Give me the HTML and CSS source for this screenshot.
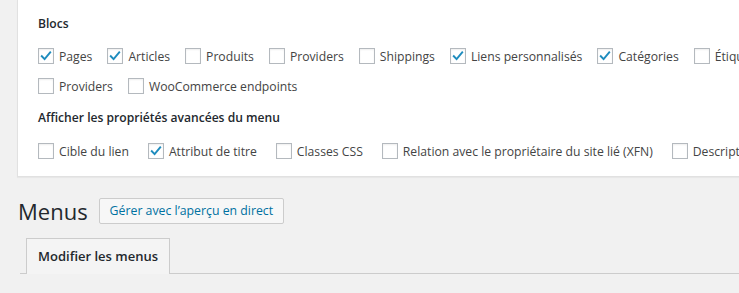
FILE: index.html
```html
<!DOCTYPE html>
<html lang="fr">
<head>
<meta charset="utf-8">
<title>Menus</title>
<link rel="stylesheet" href="styles.css">
</head>
<body>
<div class="screen-options">
  <h5 class="opt-title">Blocs</h5>
  <div class="opt-row">
    <label class="opt"><span class="cb"><svg viewBox="0 0 16 16"><path d="M3.2 8.2 L6.4 11.6 L12.8 3.8"/></svg></span>Pages</label>
    <label class="opt"><span class="cb"><svg viewBox="0 0 16 16"><path d="M3.2 8.2 L6.4 11.6 L12.8 3.8"/></svg></span>Articles</label>
    <label class="opt"><span class="cb"></span>Produits</label>
    <label class="opt"><span class="cb"></span>Providers</label>
    <label class="opt"><span class="cb"></span>Shippings</label>
    <label class="opt"><span class="cb"><svg viewBox="0 0 16 16"><path d="M3.2 8.2 L6.4 11.6 L12.8 3.8"/></svg></span>Liens personnalisés</label>
    <label class="opt"><span class="cb"><svg viewBox="0 0 16 16"><path d="M3.2 8.2 L6.4 11.6 L12.8 3.8"/></svg></span>Catégories</label>
    <label class="opt"><span class="cb"></span>Étiquettes</label>
  </div>
  <div class="opt-row">
    <label class="opt"><span class="cb"></span>Providers</label>
    <label class="opt"><span class="cb"></span>WooCommerce endpoints</label>
  </div>
  <h5 class="opt-title second">Afficher les propriétés avancées du menu</h5>
  <div class="opt-row third">
    <label class="opt"><span class="cb"></span>Cible du lien</label>
    <label class="opt"><span class="cb"><svg viewBox="0 0 16 16"><path d="M3.2 8.2 L6.4 11.6 L12.8 3.8"/></svg></span>Attribut de titre</label>
    <label class="opt"><span class="cb"></span>Classes CSS</label>
    <label class="opt"><span class="cb"></span>Relation avec le propriétaire du site lié (XFN)</label>
    <label class="opt"><span class="cb"></span>Description</label>
  </div>
</div>
<div class="wrap">
  <div class="page-head">
    <h1 class="page-title">Menus</h1>
    <a class="button" href="#">Gérer avec l’aperçu en direct</a>
  </div>
  <div class="tabs">
    <a class="tab" href="#">Modifier les menus</a>
  </div>
</div>
</body>
</html>
```
FILE: styles.css
```css
html, body {
  margin: 0;
  padding: 0;
  overflow: hidden;
}
body {
  background: #f1f1f1;
  font-family: "Open Sans", "Noto Sans", sans-serif;
  font-size: 12.2px;
  color: #444;
  width: 739px;
  height: 293px;
}
.screen-options {
  margin-left: 17px;
  width: 900px;
  background: #fff;
  border: 1px solid #e1e1e1;
  border-top: none;
  box-shadow: 0 1px 1px rgba(0,0,0,.04);
  padding: 15px 0 10px 20px;
}
.opt-title {
  margin: 0;
  font-size: 12.1px;
  line-height: 18px;
  font-weight: 600;
  color: #23282d;
}
.opt-title.second {
  margin-top: 8px;
}
.opt-row {
  display: flex;
  align-items: center;
  height: 30px;
  white-space: nowrap;
}
.opt-title + .opt-row {
  margin-top: 8px;
}
.opt-row.third {
  margin-top: 9px;
}
.opt {
  display: flex;
  align-items: center;
  margin-right: 15px;
  color: #444;
}
.opt-row.third .opt {
  margin-right: 19px;
}
.cb {
  width: 14px;
  height: 14px;
  border: 1px solid #b4b9be;
  background: #fff;
  box-shadow: inset 0 1px 2px rgba(0,0,0,.07);
  margin-right: 5px;
  flex: none;
  display: flex;
}
.cb svg {
  width: 14px;
  height: 14px;
}
.cb path {
  fill: none;
  stroke: #1e8cbe;
  stroke-width: 2.2;
  stroke-linecap: square;
}
.wrap {
  padding-left: 18px;
}
.page-head {
  margin-top: 21px;
  display: flex;
  align-items: center;
  height: 26px;
}
.page-title {
  margin: 0 11px 0 0;
  font-size: 22px;
  font-weight: 400;
  line-height: 26px;
  color: #23282d;
}
.button {
  display: inline-block;
  height: 24px;
  line-height: 24px;
  padding: 0 10px;
  border: 1px solid #ccc;
  border-radius: 2px;
  background: #f7f7f7;
  color: #0071a1;
  text-decoration: none;
  font-size: 12.3px;
}
.tabs {
  margin-top: 14px;
  margin-left: 2px;
  border-bottom: 1px solid #ccc;
  display: flex;
  padding-left: 6px;
}
.tab {
  display: block;
  height: 34px;
  line-height: 34px;
  padding: 0 11px;
  border: 1px solid #ccc;
  border-bottom: none;
  background: #f4f4f4;
  color: #23282d;
  font-weight: 600;
  font-size: 13px;
  text-decoration: none;
  margin-bottom: -1px;
  padding-bottom: 1px;
}
```
